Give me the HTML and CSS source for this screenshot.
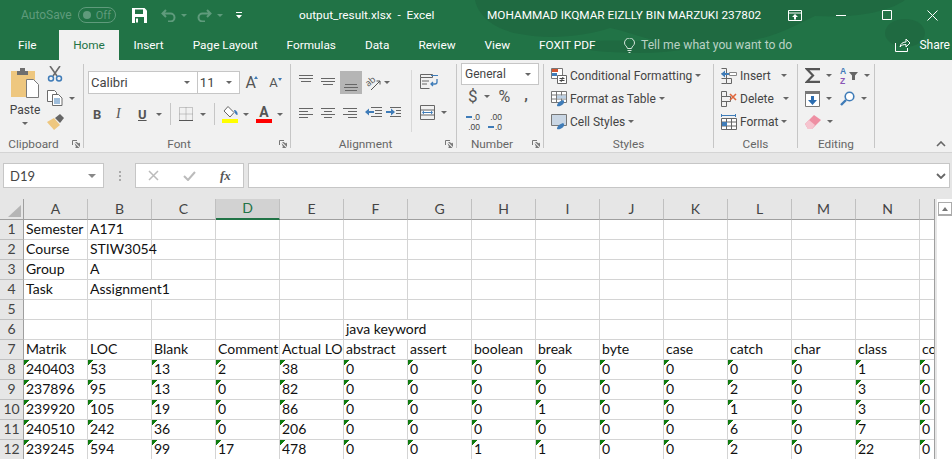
FILE: index.html
```html
<!DOCTYPE html>
<html lang="en">

<head>
  <meta charset="UTF-8">
  <title>output_result.xlsx - Excel</title>
  <link rel="stylesheet" href="styles.css">
</head>

<body>
  <header class="head">
    <svg class="head-art" width="952" height="60" viewBox="0 0 952 60">
      <path d="M475 0H905C885 14 850 18 815 16C790 28 760 46 715 42C670 52 640 34 610 28C585 36 550 40 520 34C495 30 478 16 475 0Z" />
      <path d="M560 44C600 38 660 40 690 48C660 56 590 54 560 44Z" />
      <ellipse cx="905" cy="33" rx="20" ry="14" />
    </svg>

    <div class="titlebar">
      <span class="autosave">AutoSave</span>
      <span class="toggle"><i></i>Off</span>
      <svg class="qa-save" width="15" height="15" viewBox="0 0 15 15"><path fill="#fff" d="M0 0h12.500l2.500 2.500V15H0z"/><path fill="#217346" d="M3 1.500h8V6H3zM3 9h9v6H3z"/><path fill="#fff" d="M4 10.500h2v4H4z"/></svg>
      <svg class="qa-undo" width="15" height="13" viewBox="0 0 15 13"><path fill="none" stroke="#5f9b7c" stroke-width="2" d="M5 1 1.500 4.500 5 8M2 4.500h7.500a4 4 0 0 1 0 8H7"/></svg>
      <span class="caret dim qa-c1"></span>
      <svg class="qa-redo" width="15" height="13" viewBox="0 0 15 13"><path fill="none" stroke="#5f9b7c" stroke-width="2" d="M10 1l3.500 3.500L10 8M13 4.500H5.500a4 4 0 0 0 0 8H8"/></svg>
      <span class="caret dim qa-c2"></span>
      <svg class="qa-more" width="6" height="7" viewBox="0 0 6 7"><path fill="#fff" d="M0 0h6v1H0zM0 3h6L3 6.500z"/></svg>
      <span class="doc-title">output_result.xlsx&nbsp; -&nbsp; Excel</span>
      <span class="user">MOHAMMAD IKQMAR EIZLLY BIN MARZUKI 237802</span>
      <svg class="win-display" width="14" height="11" viewBox="0 0 14 11"><path fill="none" stroke="#fff" d="M.5 .5h13v10H.5zM.5 3h13"/><path fill="#fff" d="M7 4l3 3H8v2.500H6V7H4z"/></svg>
      <svg class="win-min" width="10" height="1" viewBox="0 0 10 1"><path fill="#fff" d="M0 0h10v1H0z"/></svg>
      <svg class="win-max" width="10" height="10" viewBox="0 0 10 10"><path fill="none" stroke="#fff" d="M.5 .5h9v9h-9z"/></svg>
      <svg class="win-close" width="11" height="11" viewBox="0 0 11 11"><path fill="none" stroke="#fff" d="M.5 .5l10 10M10.500 .5l-10 10"/></svg>
    </div>

    <nav class="tabs">
      <span class="tab tab-file">File</span>
      <span class="tab tab-active">Home</span>
      <span class="tab">Insert</span>
      <span class="tab">Page Layout</span>
      <span class="tab">Formulas</span>
      <span class="tab">Data</span>
      <span class="tab">Review</span>
      <span class="tab">View</span>
      <span class="tab">FOXIT PDF</span>
      <svg class="bulb" width="11" height="15" viewBox="0 0 11 15"><path fill="none" stroke="#d5e4db" d="M3.500 10.500C3 8 .5 7.500 .5 5a5 5 0 0 1 10 0c0 2.500-2.500 3-3 5.500zM3.500 12.500h4M4.500 14.500h2"/></svg>
      <span class="tell">Tell me what you want to do</span>
      <svg class="share-icon" width="16" height="14" viewBox="0 0 16 14"><path fill="none" stroke="#fff" d="M.5 5v8.500h12V10M5 9c.5-3.500 3-5 6-5V1l4 4-4 4V6.500C8.500 6.500 6.500 7 5 9z"/></svg>
      <span class="share">Share</span>
    </nav>
  </header>

  <section class="ribbon">
    <div class="group g-clipboard">
      <div class="group-body clip-body">
        <div class="paste">
          <svg width="28" height="30" viewBox="0 0 28 30"><path fill="#eec77f" d="M0 3h24v26H0z"/><path fill="#6f6f6f" d="M6 3h3V0h5v3h3v4H6z"/><path fill="#fff" stroke="#7a7a7a" d="M15.500 11.500h7l5 5v13h-12z"/></svg>
          <span class="paste-label">Paste</span>
          <span class="caret"></span>
        </div>
        <div class="clip-tools">
          <svg width="16" height="16" viewBox="0 0 16 16"><path fill="none" stroke="#6b6b6b" stroke-width="1.600" d="M3 0l7 10M13 0 6 10"/><circle cx="4" cy="12.500" r="2.500" fill="none" stroke="#3f7cb8" stroke-width="1.500"/><circle cx="12" cy="12.500" r="2.500" fill="none" stroke="#3f7cb8" stroke-width="1.500"/></svg>
          <span class="clip-copy">
            <svg width="16" height="16" viewBox="0 0 16 16"><path fill="#fff" stroke="#6b6b6b" d="M.5 .5h7l2 2v9h-9z"/><path fill="#fff" stroke="#6b6b6b" d="M5.500 4.500h6l3.500 3.500v7.500H5.500z"/><path stroke="#3f7cb8" d="M7 9h6M7 11h6M7 13h6"/></svg>
            <span class="caret"></span>
          </span>
          <svg width="17" height="16" viewBox="0 0 17 16"><path fill="#eec77f" d="M0 8l7-4 6 7-6 5C5 13 2 11 0 8z"/><path fill="#666" d="M8 4l5-4 4 4-4 5z"/></svg>
        </div>
      </div>
      <div class="group-foot with-launcher">Clipboard<svg class="launcher" width="8" height="8" viewBox="0 0 8 8"><path fill="none" stroke="#777" d="M.5 5V.5H5"/><path fill="#777" d="M3 2l5 5V2.500L7 3.500 4.500 2zM2.500 3l5 5H3l1-1z"/></svg></div>
    </div>

    <div class="group g-font">
      <div class="group-body font-body">
        <div class="font-row">
          <div class="field font-name">Calibri<span class="caret"></span></div>
          <div class="field font-size">11<span class="caret"></span></div>
          <span class="size-btn">A<i class="up"></i></span>
          <span class="size-btn small">A<i class="down"></i></span>
        </div>
        <div class="format-row">
          <b class="fmt fmt-b">B</b>
          <i class="fmt fmt-i">I</i>
          <u class="fmt fmt-u">U</u>
          <span class="caret c-u"></span>
          <span class="vsep s1"></span>
          <svg class="borders" width="14" height="14" viewBox="0 0 14 14"><path fill="none" stroke="#999" stroke-dasharray="1 1" d="M.5 .5h13v13H.5zM7 .5v13M.5 7h13"/><path stroke="#555" d="M0 13.500h14"/></svg>
          <span class="caret c-b"></span>
          <span class="vsep s2"></span>
          <span class="colorbtn fill">
            <svg width="16" height="12" viewBox="0 0 16 12"><path fill="#fff" stroke="#666" d="M6 .5l6 6-4 4.500-6-6z"/><path fill="#3f7cb8" d="M12 4c2 0 4 2 3.500 5-1.500 0-3-2-3.500-5z"/></svg>
          </span>
          <span class="caret c-f"></span>
          <span class="colorbtn color-a">A</span>
          <span class="caret c-a"></span>
        </div>
      </div>
      <div class="group-foot with-launcher">Font<svg class="launcher" width="8" height="8" viewBox="0 0 8 8"><path fill="none" stroke="#777" d="M.5 5V.5H5"/><path fill="#777" d="M3 2l5 5V2.500L7 3.500 4.500 2zM2.500 3l5 5H3l1-1z"/></svg></div>
    </div>

    <div class="group g-align">
      <div class="group-body align-body">
        <div class="align-grid">
          <svg width="22" height="23" viewBox="0 0 22 23"><path stroke="#666" d="M3 4.500h14M3 7.500h14M5 10.500h10"/></svg>
          <svg width="22" height="23" viewBox="0 0 22 23"><path stroke="#666" d="M3 7.500h14M3 10.500h14M5 13.500h10"/></svg>
          <svg class="on" width="22" height="23" viewBox="0 0 22 23"><path stroke="#666" d="M5 13.500h12M4 16.500h14M5 19.500h12"/></svg>
          <svg class="orient" width="22" height="23" viewBox="0 0 22 23"><text x="4" y="14" transform="rotate(-40 8 12)" font-family="Open Sans" font-size="9" fill="#555">ab</text><path stroke="#555" fill="none" d="M9 19l9-9M14.500 10H18v3.500"/></svg>
          <span class="caret"></span>
          <svg width="22" height="23" viewBox="0 0 22 23"><path stroke="#666" d="M3 6.500h14M3 9.500h9M3 12.500h14M3 15.500h9"/></svg>
          <svg width="22" height="23" viewBox="0 0 22 23"><path stroke="#666" d="M3 6.500h14M6 9.500h8M3 12.500h14M6 15.500h8"/></svg>
          <svg width="22" height="23" viewBox="0 0 22 23"><path stroke="#666" d="M3 6.500h14M8 9.500h9M3 12.500h14M8 15.500h9"/></svg>
          <svg width="22" height="23" viewBox="0 0 22 23"><path stroke="#666" d="M9 5.500h11M13 8.500h7M13 11.500h7M9 14.500h11"/><path fill="#3f7cb8" d="M3 10l4-3.500v2.500h5v2H7v2.500z"/></svg>
          <svg width="22" height="23" viewBox="0 0 22 23"><path stroke="#666" d="M6 5.500h11M12 8.500h5M12 11.500h5M6 14.500h11"/><path fill="#3f7cb8" d="M11 10L7 6.500v2.500H2v2h5v2.500z"/></svg>
        </div>
        <div class="align-more">
          <svg width="18" height="15" viewBox="0 0 18 15"><path fill="none" stroke="#666" d="M.5 .5h12v3H.5zM.5 3.500v11h9"/><path stroke="#666" d="M2 7h7M2 10h5"/><path fill="none" stroke="#3f7cb8" stroke-width="1.300" d="M17 5v3c0 1.500-1 2-2 2h-4M13 8l-2 2 2 2"/><path stroke="#3f7cb8" d="M11 1.500h7"/></svg>
          <span class="merge">
            <svg width="15" height="15" viewBox="0 0 15 15"><path fill="none" stroke="#666" d="M.5 .5h14v14H.5zM.5 5h14M.5 10h14"/><path fill="#fff" d="M2 6h11v3H2z"/><path stroke="#3f7cb8" d="M3 7.500h9"/><path fill="#3f7cb8" d="M2 7.500l2-2v4zM13 7.500l-2-2v4z"/></svg>
            <span class="caret"></span>
          </span>
        </div>
      </div>
      <div class="group-foot with-launcher">Alignment<svg class="launcher" width="8" height="8" viewBox="0 0 8 8"><path fill="none" stroke="#777" d="M.5 5V.5H5"/><path fill="#777" d="M3 2l5 5V2.500L7 3.500 4.500 2zM2.500 3l5 5H3l1-1z"/></svg></div>
    </div>

    <div class="group g-number">
      <div class="group-body number-body">
        <div class="field general">General<span class="caret"></span></div>
        <div class="money-row">
          <span class="sign dollar">$</span>
          <span class="caret"></span>
          <span class="sign percent">%</span>
          <b class="comma">,</b>
        </div>
        <div class="dec-row">
          <span class="dec"><em></em>.0<br>.00</span>
          <span class="dec">.00<br><em></em>.0</span>
        </div>
      </div>
      <div class="group-foot with-launcher">Number<svg class="launcher" width="8" height="8" viewBox="0 0 8 8"><path fill="none" stroke="#777" d="M.5 5V.5H5"/><path fill="#777" d="M3 2l5 5V2.500L7 3.500 4.500 2zM2.500 3l5 5H3l1-1z"/></svg></div>
    </div>

    <div class="group g-styles">
      <div class="group-body cmd-list">
        <div class="cmd">
          <svg width="16" height="16" viewBox="0 0 16 16"><path fill="#fff" stroke="#777" d="M.5 .5h11v10H.5z"/><path fill="#d2552f" d="M1 1h6v3H1z"/><path fill="#3f7cb8" d="M1 5h5v3H1z"/><path fill="#fff" stroke="#666" d="M6.500 7.500h9v8h-9z"/><path stroke="#444" d="M8.500 10.500h5M8.500 12.500h5M12 9l-2 5"/></svg>
          Conditional Formatting<span class="caret"></span>
        </div>
        <div class="cmd">
          <svg width="16" height="16" viewBox="0 0 16 16"><path fill="#fff" stroke="#777" d="M.5 .5h15v11H.5zM5.500 .5v11M10.500 .5v11M.5 4h15M.5 8h15"/><path fill="#bcd0e4" d="M6 4.500h9v3H6z"/><path fill="#3f7cb8" d="M6 15c0-3 3-5 6-6 2 1 1 4-1 5-2 1.500-4 1.500-5 1z"/></svg>
          Format as Table<span class="caret"></span>
        </div>
        <div class="cmd">
          <svg width="16" height="16" viewBox="0 0 16 16"><path fill="#c9d6e4" stroke="#777" d="M.5 .5h15v11H.5z"/><path fill="#3f7cb8" d="M6 15c0-3 3-5 6-6 2 1 1 4-1 5-2 1.500-4 1.500-5 1z"/></svg>
          Cell Styles<span class="caret"></span>
        </div>
      </div>
      <div class="group-foot">Styles</div>
    </div>

    <div class="group g-cells">
      <div class="group-body cmd-list">
        <div class="cmd">
          <svg width="16" height="16" viewBox="0 0 16 16"><path fill="none" stroke="#666" d="M.5 .5h5v15h-5M.5 5.500h5M.5 10.500h5M5.500 10.500h5v5h-5"/><path fill="#fff" stroke="#888" d="M8.500 4.500h7v3h-7z"/><path fill="#3f7cb8" d="M0 6l4-3.500V5h4v2H4v2.500z"/></svg>
          Insert<span class="caret c-ins"></span>
        </div>
        <div class="cmd">
          <svg width="16" height="16" viewBox="0 0 16 16"><path fill="none" stroke="#666" d="M.5 .5h5v5h-5zM.5 5.500h9v5h-9zM.5 10.500h5v5h-5z"/><path stroke="#e0653a" stroke-width="1.600" d="M9 3l6 6M15 3l-6 6"/></svg>
          Delete<span class="caret c-del"></span>
        </div>
        <div class="cmd">
          <svg width="16" height="16" viewBox="0 0 16 16"><path stroke="#3f7cb8" d="M0 1.500h15M.5 0v3M14.500 0v3"/><path fill="#fff" stroke="#666" d="M.5 4.500h15v11H.5zM5.500 4.500v11M10.500 4.500v11M.5 8h15M.5 12h15"/><path fill="#3f7cb8" d="M1 8h5v4H1z"/></svg>
          Format<span class="caret"></span>
        </div>
      </div>
      <div class="group-foot">Cells</div>
    </div>

    <div class="group g-edit">
      <div class="group-body edit-grid">
        <span class="edit-cell">
          <svg width="15" height="15" viewBox="0 0 15 15"><path fill="none" stroke="#555" stroke-width="2.200" d="M15 1.200H2L8 7.500 2 13.800h13"/></svg>
          <span class="caret"></span>
        </span>
        <span class="edit-cell">
          <span class="az">A<br><span class="z">Z</span></span>
          <svg width="9" height="8" viewBox="0 0 9 8"><path fill="#666" d="M0 0h9L6 3.500V8H3V3.500z"/></svg>
          <span class="caret"></span>
        </span>
        <span class="edit-cell">
          <svg width="15" height="16" viewBox="0 0 15 16"><path fill="#fff" stroke="#777" d="M.5 .5h14v15H.5z"/><path fill="#777" d="M0 0h15v3H0z"/><path fill="#2b6cb0" d="M6 5h3v4h3l-4.500 5L3 9h3z"/></svg>
          <span class="caret"></span>
        </span>
        <span class="edit-cell">
          <svg width="15" height="15" viewBox="0 0 15 15"><circle cx="9.500" cy="5.500" r="4.300" fill="#fff" stroke="#3f7cb8" stroke-width="1.600"/><path stroke="#3f7cb8" stroke-width="2.400" d="M6 9l-5 5"/></svg>
          <span class="caret"></span>
        </span>
        <span class="edit-cell">
          <svg width="16" height="14" viewBox="0 0 16 14"><path fill="#ee8fa3" d="M0 9l9-9 7 5-9 9H3z"/><path fill="#f6c4cf" d="M0 9l4-4 6 5-3 4H3z"/></svg>
          <span class="caret"></span>
        </span>
      </div>
      <div class="group-foot">Editing</div>
    </div>

    <svg class="collapse" width="10" height="6" viewBox="0 0 10 6"><path fill="none" stroke="#666" stroke-width="1.600" d="M1 5l4-4 4 4"/></svg>
  </section>

  <section class="formula">
    <div class="box namebox">D19<span class="caret big"></span></div>
    <span class="grip"></span>
    <div class="box fx-box">
      <svg width="11" height="11" viewBox="0 0 11 11"><path fill="none" stroke="#bbb" stroke-width="1.500" d="M1 1l9 9M10 1l-9 9"/></svg>
      <svg width="13" height="10" viewBox="0 0 13 10"><path fill="none" stroke="#bbb" stroke-width="2" d="M1 5l4 4 7-8"/></svg>
      <span class="fx">fx</span>
    </div>
    <div class="box fx-input">
      <svg width="10" height="6" viewBox="0 0 10 6"><path fill="none" stroke="#666" stroke-width="1.800" d="M1 1l4 4 4-4"/></svg>
    </div>
  </section>

  <section class="sheet">
    <div class="grid-wrap">
      <table class="grid">
        <colgroup>
          <col class="col-head">
          <col span="15" class="col-cell">
        </colgroup>
        <thead>
          <tr>
            <th class="corner"><svg width="13" height="12" viewBox="0 0 13 12"><path fill="#b5b5b5" d="M13 0v12H0z"/></svg></th>
            <th>A</th><th>B</th><th>C</th><th class="sel">D</th><th>E</th><th>F</th><th>G</th><th>H</th><th>I</th><th>J</th><th>K</th><th>L</th><th>M</th><th>N</th><th></th>
          </tr>
        </thead>
        <tbody>
          <tr><th>1</th><td>Semester</td><td>A171</td><td></td><td></td><td></td><td></td><td></td><td></td><td></td><td></td><td></td><td></td><td></td><td></td><td></td></tr>
          <tr><th>2</th><td>Course</td><td>STIW3054</td><td></td><td></td><td></td><td></td><td></td><td></td><td></td><td></td><td></td><td></td><td></td><td></td><td></td></tr>
          <tr><th>3</th><td>Group</td><td>A</td><td></td><td></td><td></td><td></td><td></td><td></td><td></td><td></td><td></td><td></td><td></td><td></td><td></td></tr>
          <tr><th>4</th><td>Task</td><td class="spill">Assignment1</td><td></td><td></td><td></td><td></td><td></td><td></td><td></td><td></td><td></td><td></td><td></td><td></td><td></td></tr>
          <tr><th>5</th><td></td><td></td><td></td><td></td><td></td><td></td><td></td><td></td><td></td><td></td><td></td><td></td><td></td><td></td><td></td></tr>
          <tr><th>6</th><td></td><td></td><td></td><td></td><td></td><td class="spill">java keyword</td><td></td><td></td><td></td><td></td><td></td><td></td><td></td><td></td><td></td></tr>
          <tr><th>7</th><td>Matrik</td><td>LOC</td><td>Blank</td><td>Comment</td><td class="cut">Actual LOC</td><td>abstract</td><td>assert</td><td>boolean</td><td>break</td><td>byte</td><td>case</td><td>catch</td><td>char</td><td>class</td><td>co</td></tr>
          <tr class="nums"><th>8</th><td>240403</td><td>53</td><td>13</td><td>2</td><td>38</td><td>0</td><td>0</td><td>0</td><td>0</td><td>0</td><td>0</td><td>0</td><td>0</td><td>1</td><td>0</td></tr>
          <tr class="nums"><th>9</th><td>237896</td><td>95</td><td>13</td><td>0</td><td>82</td><td>0</td><td>0</td><td>0</td><td>0</td><td>0</td><td>0</td><td>2</td><td>0</td><td>3</td><td>0</td></tr>
          <tr class="nums"><th>10</th><td>239920</td><td>105</td><td>19</td><td>0</td><td>86</td><td>0</td><td>0</td><td>0</td><td>1</td><td>0</td><td>0</td><td>1</td><td>0</td><td>3</td><td>0</td></tr>
          <tr class="nums"><th>11</th><td>240510</td><td>242</td><td>36</td><td>0</td><td>206</td><td>0</td><td>0</td><td>0</td><td>0</td><td>0</td><td>0</td><td>6</td><td>0</td><td>7</td><td>0</td></tr>
          <tr class="nums"><th>12</th><td>239245</td><td>594</td><td>99</td><td>17</td><td>478</td><td>0</td><td>0</td><td>1</td><td>1</td><td>0</td><td>0</td><td>2</td><td>0</td><td>22</td><td>0</td></tr>
        </tbody>
      </table>
    </div>
    <div class="vscroll">
      <span class="scroll-up"><i></i></span>
    </div>
  </section>
</body>

</html>
```

FILE: styles.css
```css
* {
  box-sizing: border-box;
}
html, body {
  margin: 0;
  height: 459px;
  overflow: hidden;
}
body {
  background: #e6e6e6;
  font-family: Roboto, "Open Sans", sans-serif;
  font-size: 12px;
  color: #444;
}
svg {
  display: block;
  flex: none;
}

/* small dropdown triangle used everywhere */
.caret {
  display: inline-block;
  flex: none;
  width: 0;
  height: 0;
  border-left: 3px solid transparent;
  border-right: 3px solid transparent;
  border-top: 3px solid #666;
}
.caret.dim {
  border-top-color: #5f9b7c;
}

/* title bar and tabs */
.head {
  position: relative;
  height: 60px;
  background: #217346;
  color: #fff;
}
.head-art {
  position: absolute;
  top: 0;
  left: 0;
  fill: #1f6a41;
}
.titlebar, .tabs {
  position: relative;
  display: flex;
  align-items: center;
  height: 30px;
}
.autosave {
  width: 57px;
  margin-left: 21px;
  color: #5f9b7c;
}
.toggle {
  display: flex;
  align-items: center;
  justify-content: space-between;
  width: 38px;
  height: 16px;
  padding: 0 4px;
  border: 1px solid #5f9b7c;
  border-radius: 8px;
  color: #5f9b7c;
  font-size: 11px;
}
.toggle i {
  width: 8px;
  height: 8px;
  border-radius: 50%;
  background: #5f9b7c;
}
.qa-save { margin-left: 16px; }
.qa-undo { margin-left: 14px; }
.qa-c1 { margin-left: 5px; }
.qa-redo { margin-left: 10px; }
.qa-c2 { margin-left: 5px; }
.qa-more { margin-left: 13px; }
.doc-title {
  width: 188px;
  margin-left: 57px;
  font-size: 11.800px;
  white-space: nowrap;
}
.user {
  width: 301px;
  font-size: 11.800px;
  white-space: nowrap;
}
.win-min { margin-left: 34px; }
.win-max { margin-left: 36px; }
.win-close { margin-left: 35px; }

.tab {
  padding: 0 14.500px;
  line-height: 30px;
  font-size: 11.800px;
  white-space: nowrap;
}
.tab-file {
  width: 59px;
  padding: 0 0 0 18px;
}
.tab-active {
  width: 60px;
  padding: 0;
  text-align: center;
  background: #f1f1f1;
  color: #217346;
}
.bulb {
  margin-left: 14px;
}
.tell {
  margin-left: 6px;
  color: #b9d1c4;
  font-size: 12.200px;
  white-space: nowrap;
}
.share-icon {
  margin-left: auto;
}
.share {
  margin: 0 2px 0 8px;
}

/* ribbon */
.ribbon {
  position: relative;
  display: flex;
  height: 93px;
  padding-top: 4px;
  background: #f1f1f1;
  border-bottom: 1px solid #d4d4d4;
}
.group {
  position: relative;
  height: 84px;
  border-right: 1px solid #c6c6c6;
  flex: none;
}
.group-body {
  height: 73px;
}
.group-foot {
  position: relative;
  height: 14px;
  line-height: 14px;
  text-align: center;
  font-size: 11.800px;
  color: #666;
}
.with-launcher {
  padding-right: 16px;
}
.launcher {
  position: absolute;
  right: 3px;
  top: 3px;
}
.g-clipboard { width: 84px; }
.g-font { width: 207px; }
.g-align { width: 166px; }
.g-number { width: 87px; }
.g-styles { width: 170px; }
.g-cells { width: 84px; }
.g-edit { width: 77px; }
.collapse {
  position: absolute;
  right: 6px;
  bottom: 5px;
}

.clip-body {
  display: flex;
}
.paste {
  display: flex;
  flex-direction: column;
  align-items: center;
  width: 44px;
  margin-left: 3px;
  padding-top: 4px;
}
.paste-label {
  margin: 3px 0 3px;
  line-height: 18px;
}
.clip-tools {
  display: flex;
  flex-direction: column;
  gap: 8px;
  padding-top: 2px;
}
.clip-copy {
  display: flex;
  align-items: center;
  gap: 6px;
}

.field {
  display: flex;
  align-items: center;
  justify-content: space-between;
  background: #fff;
  border: 1px solid #c6c6c6;
}
.font-body {
  padding: 7px 0 0 4px;
}
.font-row {
  display: flex;
  align-items: center;
}
.font-name {
  width: 111px;
  height: 23px;
  padding: 0 7px 0 2px;
  font-size: 13px;
}
.font-size {
  width: 43px;
  height: 23px;
  padding: 0 7px 0 2px;
  border-left: 0;
  font-size: 13px;
}
.size-btn {
  position: relative;
  width: 22px;
  margin-left: 5px;
  font-size: 16px;
  color: #555;
}
.size-btn.small {
  margin-left: 1px;
  padding-left: 1px;
  font-size: 13px;
}
.size-btn i {
  position: absolute;
  top: 3px;
  left: 9px;
  border-left: 2.500px solid transparent;
  border-right: 2.500px solid transparent;
}
.size-btn i.up { border-bottom: 3px solid #3f7cb8; }
.size-btn i.down { border-top: 3px solid #3f7cb8; left: 10px; }

.format-row {
  display: flex;
  align-items: center;
  height: 24px;
  margin-top: 8px;
  padding-left: 5px;
}
.fmt {
  font-size: 13px;
  color: #555;
}
.fmt-b { width: 23px; }
.fmt-i { width: 22px; font-family: "Liberation Serif", serif; font-size: 14px; }
.fmt-u { width: 18px; font-weight: bold; }
.c-u { margin-right: 8px; }
.vsep {
  width: 1px;
  height: 22px;
  background: #c6c6c6;
}
.borders { margin-left: 8px; }
.c-b { margin-left: 7px; margin-right: 8px; }
.colorbtn {
  display: block;
  width: 16px;
  height: 17px;
}
.fill {
  margin-left: 7px;
  border-bottom: 4px solid #ff0;
}
.c-f { margin-left: 5px; }
.color-a {
  margin-left: 7px;
  border-bottom: 4px solid #f00;
  text-align: center;
  line-height: 13px;
  font-size: 14px;
  font-weight: bold;
  color: #555;
}
.c-a { margin-left: 5px; }

.align-body {
  display: flex;
}
.align-grid {
  display: grid;
  grid-template-columns: repeat(5, 22px);
  grid-template-rows: 23px 23px;
  row-gap: 8px;
  align-items: center;
  width: 121px;
  height: 62px;
  margin-top: 6px;
  padding: 1px 0 0 5px;
  border-right: 1px solid #d8d8d8;
}
.on {
  background: #b5b5b5;
}
.orient {
  overflow: visible;
}
.align-more {
  display: flex;
  flex-direction: column;
  gap: 16px;
  padding: 10px 0 0 8px;
}
.merge {
  display: flex;
  align-items: center;
  gap: 6px;
}

.number-body {
  height: 74px;
  margin-top: -1px;
  padding-left: 4px;
}
.general {
  width: 78px;
  height: 22px;
  padding: 0 7px 0 3px;
}
.money-row {
  display: flex;
  align-items: center;
  height: 22px;
  padding-left: 7px;
}
.money-row .caret { margin-left: 6px; }
.sign {
  color: #555;
  font-size: 17px;
}
.percent { margin-left: 9px; font-size: 16px; }
.comma {
  margin: -3px 0 0 14px;
  font-size: 15px;
  color: #555;
}
.dec-row {
  display: flex;
  gap: 6px;
  margin-top: 5px;
  padding-left: 3px;
}
.dec {
  display: block;
  width: 16px;
  font-family: "Liberation Sans", sans-serif;
  font-size: 8.500px;
  line-height: 10px;
  text-align: right;
  white-space: nowrap;
}
.dec em {
  display: inline-block;
  width: 6px;
  height: 2px;
  margin-right: 1px;
  vertical-align: 2px;
  background: #3f7cb8;
}

.cmd-list {
  padding-left: 7px;
}
.cmd {
  display: flex;
  align-items: center;
  height: 23px;
  white-space: nowrap;
}
.cmd svg {
  margin-right: 3px;
}
.cmd .caret {
  margin-left: 3px;
}
.cmd .c-ins { margin-left: 10px; }
.cmd .c-del { margin-left: 9px; }

.edit-grid {
  display: grid;
  grid-template-columns: 35px 1fr;
  grid-auto-rows: 23px;
  padding-left: 7px;
}
.edit-cell {
  display: flex;
  align-items: center;
  gap: 6px;
}
.edit-cell svg + svg { margin-left: -4px; }
.az {
  font-family: "Liberation Sans", sans-serif;
  font-size: 8.500px;
  line-height: 10px;
  color: #3f7cb8;
  font-weight: bold;
}
.az .z { color: #8a55b5; }
.az + svg { margin-left: -3px; }

/* formula bar */
.formula {
  display: flex;
  height: 46px;
  padding-top: 10px;
}
.box {
  display: flex;
  align-items: center;
  height: 25px;
  background: #fff;
  border: 1px solid #c6c6c6;
}
.namebox {
  justify-content: space-between;
  width: 101px;
  margin-left: 3px;
  padding: 0 7px 0 6px;
  font-family: Lato, "Open Sans", sans-serif;
  font-size: 13px;
}
.caret.big {
  border-left-width: 4px;
  border-right-width: 4px;
  border-top-width: 4px;
  border-top-color: #888;
}
.grip {
  width: 2px;
  height: 10px;
  margin: 8px 14px 0 15px;
  background: repeating-linear-gradient(#aaa 0 2px, transparent 2px 4px);
}
.fx-box {
  gap: 24px;
  width: 109px;
  padding-left: 12px;
}
.fx {
  color: #555;
  font-family: "Liberation Serif", serif;
  font-style: italic;
  font-weight: bold;
  font-size: 13px;
}
.fx-input {
  justify-content: flex-end;
  width: 702px;
  margin-left: 4px;
  padding-right: 3px;
}

/* worksheet */
.sheet {
  display: flex;
  height: 260px;
}
.grid-wrap {
  width: 935px;
  overflow: hidden;
  background: #fff;
  border-right: 1px solid #9f9f9f;
}
.grid {
  table-layout: fixed;
  width: 984px;
  border-collapse: separate;
  border-spacing: 0;
  font-family: Lato, "Open Sans", sans-serif;
  font-size: 14px;
  color: #111;
}
.col-head { width: 24px; }
.col-cell { width: 64px; }
.grid th, .grid td {
  height: 20px;
  padding: 0 2px 1px;
  line-height: 18px;
  white-space: nowrap;
  font-weight: normal;
}
.grid td {
  border-right: 1px solid #d4d4d4;
  border-bottom: 1px solid #d4d4d4;
}
.grid th {
  background: #e6e6e6;
  text-align: center;
  color: #444;
  border-right: 1px solid #c0c0c0;
  border-bottom: 1px solid #9f9f9f;
}
.grid tbody th {
  padding: 0 0 1px;
  border-right: 1px solid #9f9f9f;
  border-bottom: 1px solid #c0c0c0;
}
.grid .corner {
  padding: 3px 0 0 8px;
  border-right: 1px solid #9f9f9f;
}
.grid .sel {
  background: #d2d2d2;
  color: #217346;
  border-bottom: 2px solid #217346;
}
.grid .spill {
  border-right: 0;
}
.grid .cut {
  overflow: hidden;
}
.nums td {
  background: linear-gradient(135deg, #107c10 4px, transparent 4px);
}

.vscroll {
  width: 17px;
  padding: 3px 0 0 3px;
  background: linear-gradient(90deg, #e6e6e6 2px, #fff 2px);
}
.scroll-up {
  display: flex;
  align-items: center;
  justify-content: center;
  width: 14px;
  height: 14px;
  background: #fff;
  border: 1px solid #ababab;
  border-bottom-width: 2px;
}
.scroll-up i {
  border-left: 3.500px solid transparent;
  border-right: 3.500px solid transparent;
  border-bottom: 4px solid #777;
}
```
